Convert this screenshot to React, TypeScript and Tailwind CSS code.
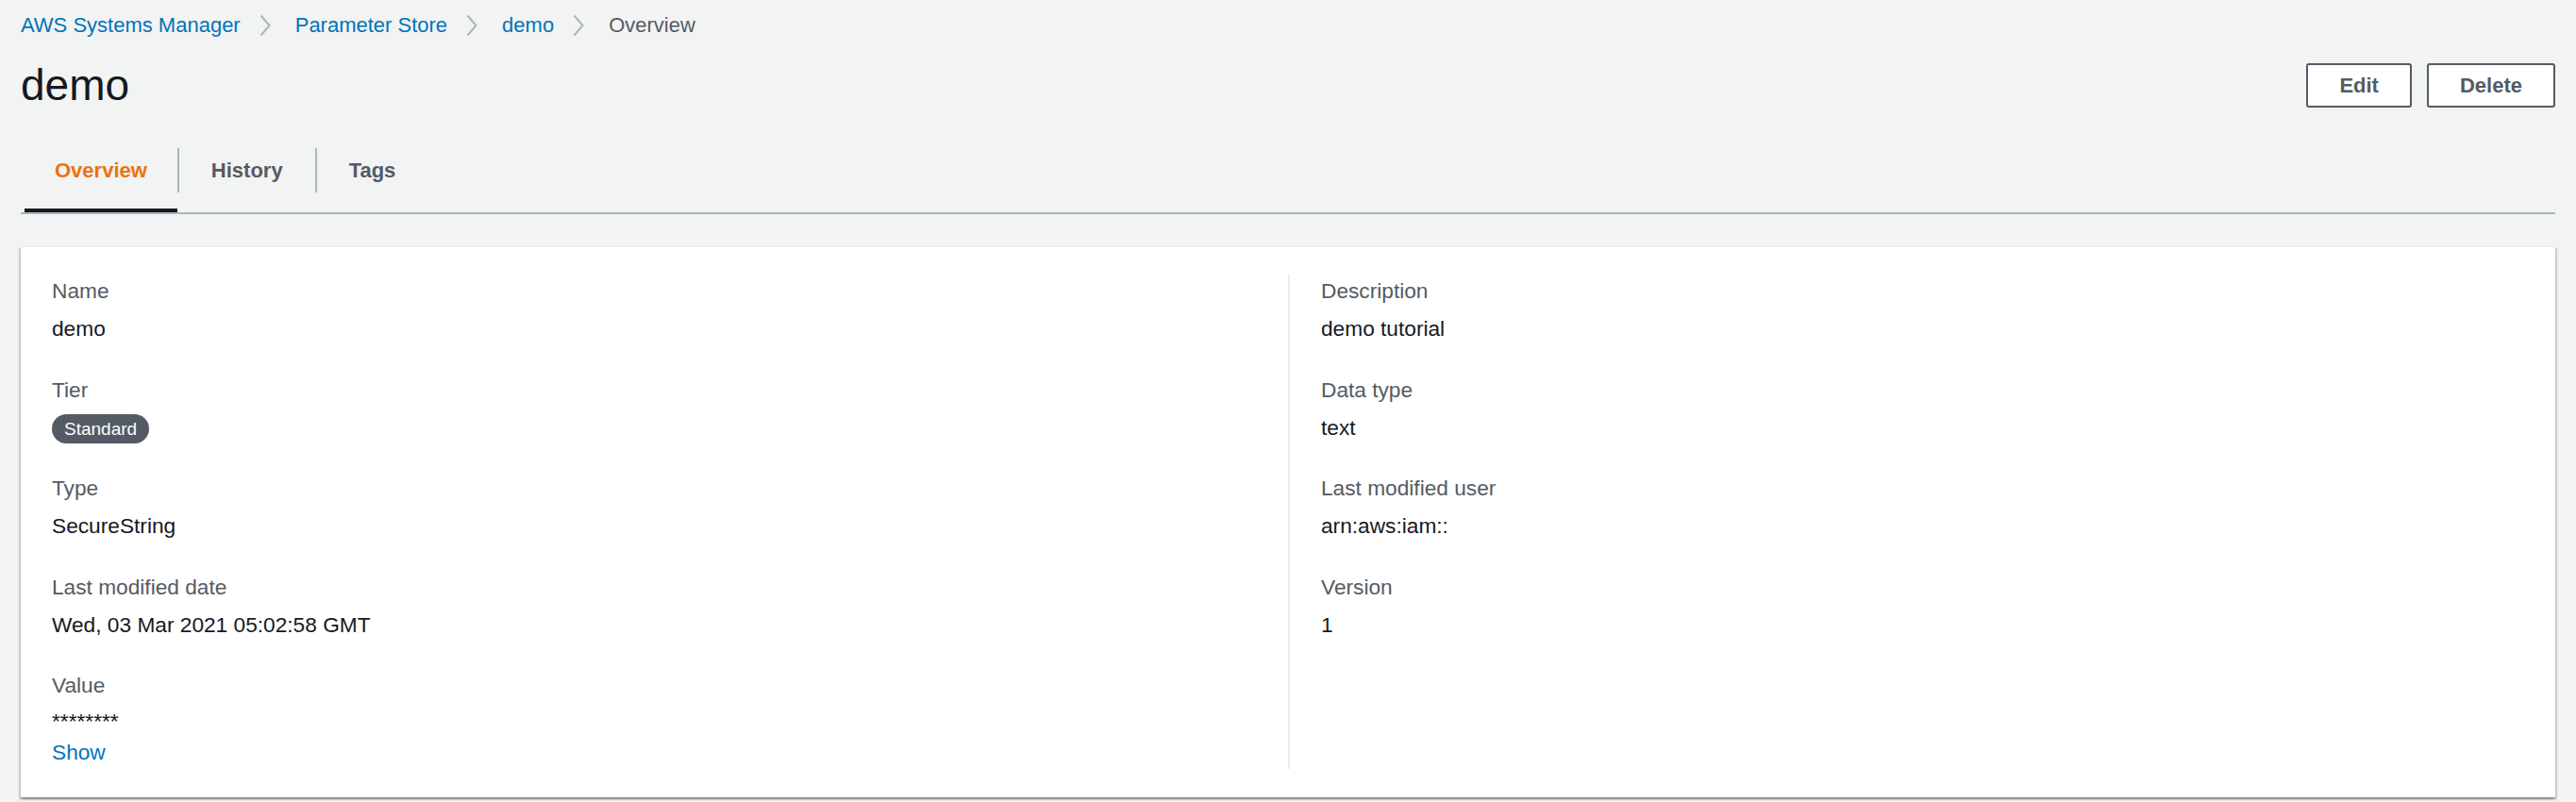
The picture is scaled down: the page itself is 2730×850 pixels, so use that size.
import React from 'react';

function Chevron() {
  return (
    <svg width="12" height="24" viewBox="0 0 12 24" className="ml-[20px] mr-[26px] shrink-0" fill="none">
      <polyline points="1.5,1.5 10.5,12 1.5,22.5" stroke="#aab7b8" strokeWidth="2" />
    </svg>
  );
}

function Field({ label, children }: { label: string; children: React.ReactNode }) {
  return (
    <div>
      <div className="h-[35px] text-[#545b64]">{label}</div>
      <div className="mt-[5px] text-[#16191f]">{children}</div>
    </div>
  );
}

export default function App() {
  const crumbs = ['AWS Systems Manager', 'Parameter Store', 'demo'];

  return (
    <div className="min-h-screen bg-[#f2f3f3] px-[22px] pt-[9px] font-['Liberation_Sans',Arial,sans-serif] text-[22.7px] leading-[35px] text-[#16191f]">
      {/* ── Breadcrumbs ── */}
      <nav className="flex h-[35px] items-center text-[22px]">
        {crumbs.map(c => (
          <React.Fragment key={c}>
            <a className="text-[#0073bb] whitespace-nowrap">{c}</a>
            <Chevron />
          </React.Fragment>
        ))}
        <span className="text-[#545b64]">Overview</span>
      </nav>

      {/* ── Header ── */}
      <div className="mt-[18px] flex items-center justify-between">
        <h1 className="text-[46px] leading-[56px] text-[#16191f]">demo</h1>
        <div className="flex gap-4">
          <button className="h-[47px] rounded-[3px] border-2 border-[#545b64] bg-white px-[33px] text-[22px] font-bold text-[#545b64]">Edit</button>
          <button className="h-[47px] rounded-[3px] border-2 border-[#545b64] bg-white px-[33px] text-[22px] font-bold text-[#545b64]">Delete</button>
        </div>
      </div>

      {/* ── Tabs ── */}
      <div className="mt-[17px] border-b-2 border-[#aab7b8]">
        <div className="flex items-center pl-[4px] text-[22px]">
          <div className="relative flex h-[90px] items-center px-[32px] font-bold text-[#ec7211]">
            Overview
            <span className="absolute bottom-0 left-0 right-0 h-[4px] bg-[#16191f]" />
          </div>
          <span className="h-[47px] w-[2px] bg-[#aab7b8]" />
          <div className="flex h-[90px] items-center px-[34px] font-bold text-[#545b64]">History</div>
          <span className="h-[47px] w-[2px] bg-[#aab7b8]" />
          <div className="flex h-[90px] items-center px-[34px] font-bold text-[#545b64]">Tags</div>
        </div>
      </div>

      {/* ── Details card ── */}
      <div className="mt-[34px] grid grid-cols-2 border-t border-[#eaeded] bg-white px-[33px] pb-[30px] pt-[29px] shadow-[0_2px_2px_0_rgba(0,28,36,0.3),2px_2px_2px_0_rgba(0,28,36,0.15),-2px_2px_2px_0_rgba(0,28,36,0.15)]">
        <div className="flex flex-col gap-[29.5px]">
          <Field label="Name">demo</Field>
          <Field label="Tier">
            <span className="inline-flex h-[31px] items-center rounded-full bg-[#545b64] px-[13px] text-[19px] leading-none text-white">Standard</span>
          </Field>
          <Field label="Type">SecureString</Field>
          <Field label="Last modified date">Wed, 03 Mar 2021 05:02:58 GMT</Field>
          <Field label="Value">
            <div className="h-[31px] leading-[31px]">********</div>
            <a className="block text-[#0073bb]">Show</a>
          </Field>
        </div>
        <div className="flex flex-col gap-[29.5px] border-l-2 border-[#eaeded] pl-[33px]">
          <Field label="Description">demo tutorial</Field>
          <Field label="Data type">text</Field>
          <Field label="Last modified user">arn:aws:iam::</Field>
          <Field label="Version">1</Field>
        </div>
      </div>
    </div>
  );
}
